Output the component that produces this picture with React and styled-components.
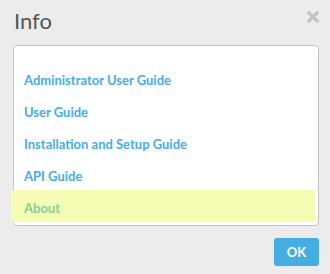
import React from "react";
import styled, { createGlobalStyle } from "styled-components";

const links = [
  "Administrator User Guide",
  "User Guide",
  "Installation and Setup Guide",
  "API Guide",
  "About",
];

export default function App() {
  return (
    <>
      <GlobalStyle />
      <Dialog>
        <Header>
          <Title>Info</Title>
          <Close aria-label="close">
            <svg width="12" height="12" viewBox="0 0 12 12">
              <path d="M2 2 L10 10 M10 2 L2 10" stroke="#c4c4c4" strokeWidth="3.4" strokeLinecap="square" />
            </svg>
          </Close>
        </Header>
        <List>
          {links.map((name, i) => (
            <Item key={i} active={name === "About"}>
              <Link href="#" active={name === "About"}>{name}</Link>
            </Item>
          ))}
        </List>
        <Footer>
          <Button>OK</Button>
        </Footer>
      </Dialog>
    </>
  );
}

const GlobalStyle = createGlobalStyle`
  body {
    margin: 0;
    background: #ececec;
    font-family: Lato, "Open Sans", sans-serif;
  }
`;

const Dialog = styled.div`
  width: 330px;
  height: 274px;
  box-sizing: border-box;
  padding: 0 11px 0 13px;
  display: flex;
  flex-direction: column;
`;

const Header = styled.div`
  height: 45px;
  display: flex;
  justify-content: space-between;
  align-items: flex-start;
`;

const Title = styled.h2`
  margin: 8px 0 0 1px;
  font-size: 22px;
  font-weight: 400;
  line-height: 26px;
  color: #555;
`;

const Close = styled.button`
  margin-top: 11px;
  padding: 0;
  border: none;
  background: none;
  display: flex;
`;

const List = styled.ul`
  margin: 0;
  padding: 16px 0 3px;
  list-style: none;
  background: #fff;
  border: 1px solid #c4c4c4;
  border-radius: 4px;
`;

const Item = styled.li`
  height: 32px;
  margin: 0 3px 0 -3px;
  padding-left: 13px;
  display: flex;
  align-items: center;
  background: ${(p) => (p.active ? "#f5fcb3" : "transparent")};
`;

const Link = styled.a`
  font-size: 13px;
  font-weight: 700;
  text-decoration: none;
  padding-top: 3px;
  color: ${(p) => (p.active ? "#7fd0a0" : "#46ade2")};
`;

const Footer = styled.div`
  display: flex;
  justify-content: flex-end;
  padding-top: 12px;
`;

const Button = styled.button`
  width: 45px;
  height: 28px;
  border: none;
  border-radius: 3px;
  background: #45ade1;
  color: #fff;
  font-family: Lato, sans-serif;
  font-size: 13px;
  font-weight: 700;
`;
